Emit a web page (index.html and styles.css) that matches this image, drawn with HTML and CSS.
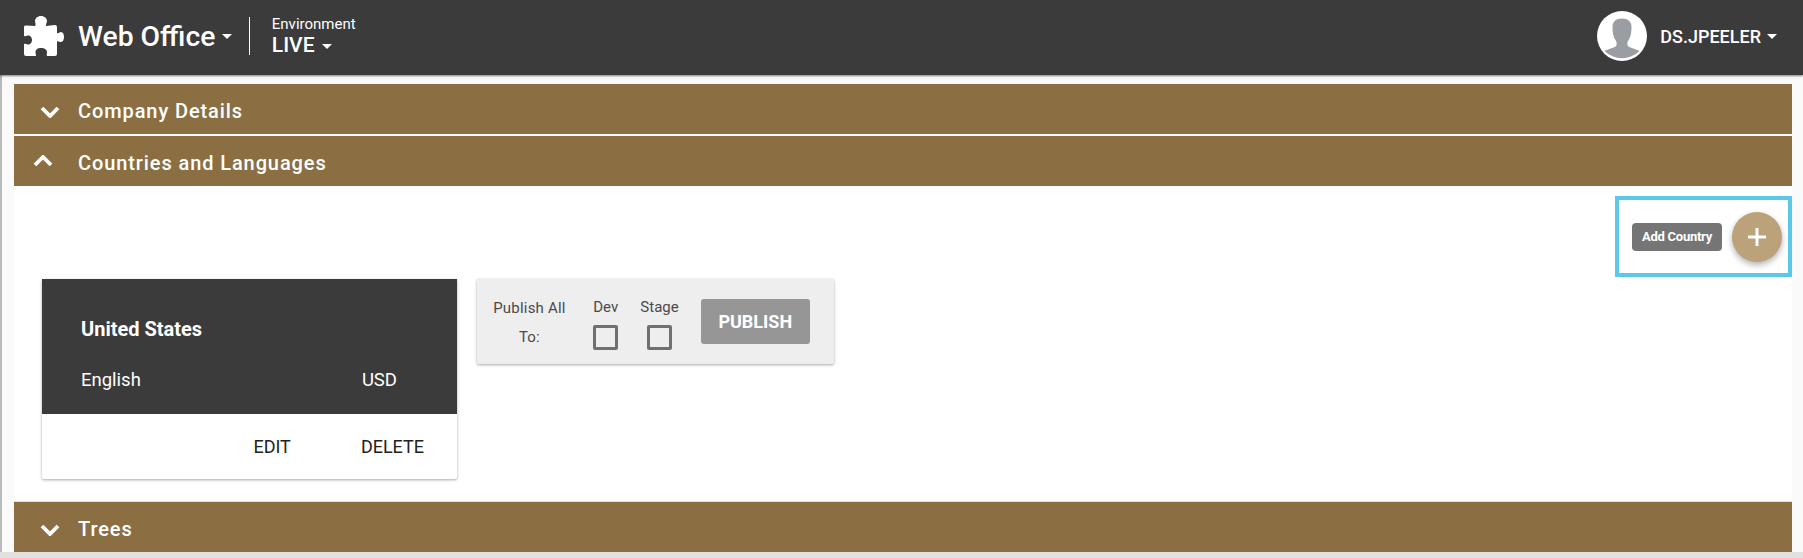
FILE: index.html
```html
<!DOCTYPE html>
<html lang="en">
<head>
    <meta charset="UTF-8">
    <title>Web Office</title>
    <link rel="stylesheet" href="styles.css">
</head>
<body>

<header class="topbar">
    <div class="brand">
        <svg class="puzzle" viewBox="0 0 40 40" width="40" height="40"><path fill="#fff" d="M17 0C20.500 0 23 2.500 23 5C23 7 21.500 8 22 10L31 9Q33 9 33 11L33 17C34.500 18 35 16 37 16C39 16 40 18.500 40 21C40 23.500 39 26 37 26C35 26 34.500 24.500 33 25.500L33 38Q33 40 31 40L24 40C22 40 23 38 23 36C23 33.500 20 32 17 32C14 32 11.500 33.500 11.500 36C11.500 38 13 40 11 40L2 40Q0 40 0 38L0 29C0 27 2 28 3.500 28.500C6 29 8 27 8 24C8 21 6 19 3.500 19.500C2 20 0 21 0 19L0 11Q0 9 2 9.500L11 10C12.500 8 11 7 11 5C11 2.500 13.500 0 17 0Z"/></svg>
        <span class="brand-name">Web Office</span>
        <span class="caret"></span>
    </div>
    <div class="env">
        <div class="env-label">Environment</div>
        <div class="env-value">LIVE <span class="caret"></span></div>
    </div>
    <div class="user">
        <svg class="avatar" viewBox="0 0 50 50" width="50" height="50">
            <circle cx="25" cy="25" r="25" fill="#fff"/>
            <path fill="#9a9da1" d="M25 7.500c-6 0-9.500 3-9.500 8.500 0 6 1 10.500 3.500 14 1 1.500 1 4-.5 5.500-2 1.400-7 2.500-11 4.500a25 25 0 0 0 35 0c-4-2-9-3.100-11-4.500-1.500-1.500-1.500-4-.5-5.500 2.500-3.500 3.500-8 3.500-14 0-5.500-3.500-8.500-9.500-8.500z"/>
        </svg>
        <span class="user-name">DS.JPEELER</span>
        <span class="caret"></span>
    </div>
</header>

<main class="page">
    <section class="panel-bar">
        <svg class="chev" viewBox="0 0 20 12" width="20" height="12"><path d="M2 2l8 8 8-8" fill="none" stroke="#fff" stroke-width="3.800"/></svg>
        <span>Company Details</span>
    </section>
    <section class="panel-bar second">
        <svg class="chev up" viewBox="0 0 20 12" width="20" height="12"><path d="M2 10l8-8 8 8" fill="none" stroke="#fff" stroke-width="3.800"/></svg>
        <span>Countries and Languages</span>
    </section>

    <div class="panel-body">
        <div class="add-row">
            <div class="add-box">
                <span class="add-tag">Add Country</span>
                <span class="fab">
                    <svg viewBox="0 0 20 20" width="20" height="20"><path d="M10 1v18M1 10h18" stroke="#fff" stroke-width="3"/></svg>
                </span>
            </div>
        </div>

        <div class="cards">
            <div class="card">
                <div class="card-top">
                    <div class="card-title">United States</div>
                    <div class="card-meta">
                        <span>English</span>
                        <span class="currency">USD</span>
                    </div>
                </div>
                <div class="card-actions">
                    <span class="action-edit">EDIT</span>
                    <span>DELETE</span>
                </div>
            </div>

            <div class="publish">
                <div class="publish-label">Publish All<br>To:</div>
                <div class="check">
                    <span>Dev</span>
                    <span class="box"></span>
                </div>
                <div class="check">
                    <span>Stage</span>
                    <span class="box"></span>
                </div>
                <button type="button" class="publish-btn">PUBLISH</button>
            </div>
        </div>
    </div>

    <section class="panel-bar">
        <svg class="chev" viewBox="0 0 20 12" width="20" height="12"><path d="M2 2l8 8 8-8" fill="none" stroke="#fff" stroke-width="3.800"/></svg>
        <span>Trees</span>
    </section>
</main>

</body>
</html>
```

FILE: styles.css
```css
html, body {
    margin: 0;
    padding: 0;
    height: 558px;
    overflow: hidden;
}

body {
    background: #e0e2e0;
    font-family: Roboto, sans-serif;
    color: #fff;
}

.topbar {
    height: 75px;
    box-sizing: border-box;
    background: #3b3b3b;
    box-shadow: 0 1px 2px rgba(0, 0, 0, 0.5);
    display: flex;
    align-items: center;
    padding: 0 26px 3px 24px;
    position: relative;
}

.brand {
    display: flex;
    align-items: center;
    height: 38px;
    padding-right: 16.5px;
    border-right: 1px solid #fff;
}

.puzzle {
    margin-right: 14px;
}

.brand-name {
    font-size: 28.3px;
    font-weight: 500;
    margin-right: 7px;
}

.caret {
    display: inline-block;
    width: 0;
    height: 0;
    border-left: 5px solid transparent;
    border-right: 5px solid transparent;
    border-top: 5px solid #fff;
}

.env {
    margin-left: 22px;
}

.env-label {
    font-size: 15px;
    line-height: 18px;
}

.env-value {
    font-size: 21px;
    font-weight: 500;
    line-height: 24px;
}

.env-value .caret {
    vertical-align: middle;
    margin-left: 2px;
}

.user {
    margin-left: auto;
    display: flex;
    align-items: center;
}

.avatar {
    margin-right: 13px;
}

.user-name {
    font-size: 18px;
    font-weight: 500;
    margin-right: 6px;
}

.page {
    height: 477px;
    background: #fafafa;
    border-left: 2px solid #b8b8b8;
    padding: 9px 11px 0 12px;
    box-sizing: border-box;
}

.panel-bar {
    height: 50px;
    box-sizing: border-box;
    background: #8b6f43;
    display: flex;
    align-items: center;
    font-size: 20px;
    font-weight: 500;
    letter-spacing: 0.9px;
    padding: 4px 0 0 64px;
    position: relative;
}

.panel-bar.second {
    margin-top: 2px;
}

.chev {
    position: absolute;
    left: 26px;
    top: 22px;
}

.chev.up {
    left: 19px;
    top: 19px;
}

.panel-body {
    height: 316px;
    background: #fff;
    border-bottom: 1px solid #e0e0e0;
    box-sizing: border-box;
    padding-top: 10px;
}

.add-row {
    display: flex;
    justify-content: flex-end;
}

.add-box {
    width: 177px;
    height: 81px;
    box-sizing: border-box;
    border: 4px solid #5bc8e8;
    display: flex;
    align-items: center;
    padding-left: 13px;
}

.add-tag {
    width: 90px;
    height: 28px;
    background: #757575;
    border-radius: 4px;
    color: #fff;
    font-size: 13px;
    font-weight: 700;
    letter-spacing: -0.25px;
    display: flex;
    align-items: center;
    justify-content: center;
    margin-right: 10px;
}

.fab {
    width: 50px;
    height: 50px;
    border-radius: 50%;
    background: #bba27a;
    box-shadow: 0 3px 6px rgba(0, 0, 0, 0.3);
    display: flex;
    align-items: center;
    justify-content: center;
}

.cards {
    display: flex;
    align-items: flex-start;
    gap: 20px;
    margin: 2px 0 0 28px;
}

.card {
    width: 415px;
    background: #fff;
    border-radius: 2px;
    box-shadow: 0 1px 3px rgba(0, 0, 0, 0.35);
}

.card-top {
    height: 135px;
    background: #3b3b3b;
    box-sizing: border-box;
    padding: 38px 60px 0 39px;
}

.card-title {
    font-size: 20px;
    font-weight: 700;
    line-height: 24px;
}

.card-meta {
    display: flex;
    justify-content: space-between;
    font-size: 18.5px;
    line-height: 24px;
    margin-top: 27px;
}

.card-actions {
    height: 65px;
    display: flex;
    align-items: center;
    justify-content: flex-end;
    padding-right: 33px;
    color: #212121;
    font-size: 18px;
    font-weight: 400;
}

.action-edit {
    margin-right: 70px;
}

.publish {
    width: 357px;
    height: 85px;
    box-sizing: border-box;
    background: #eeeeee;
    border-radius: 2px;
    box-shadow: 0 1px 3px rgba(0, 0, 0, 0.35);
    display: flex;
    align-items: flex-start;
    padding: 20px 24px 0 16px;
    color: #4a4a4a;
    font-size: 15px;
}

.publish-label {
    width: 74px;
    text-align: center;
    line-height: 29px;
    margin-top: -5px;
    letter-spacing: 0.2px;
}

.check {
    display: flex;
    flex-direction: column;
    align-items: center;
    margin-left: 27px;
    line-height: 18px;
    margin-top: -1px;
    width: 26px;
}

.check + .check {
    margin-left: 28px;
    width: 26px;
}

.box {
    display: block;
    width: 25px;
    height: 25px;
    box-sizing: border-box;
    border: 3px solid #707070;
    border-radius: 2px;
    margin-top: 9px;
}

.publish-btn {
    width: 111px;
    height: 45px;
    margin-left: 28px;
    background: #969696;
    border: none;
    border-radius: 3px;
    color: #fff;
    font-family: Roboto, sans-serif;
    font-size: 18px;
    font-weight: 700;
}
```
